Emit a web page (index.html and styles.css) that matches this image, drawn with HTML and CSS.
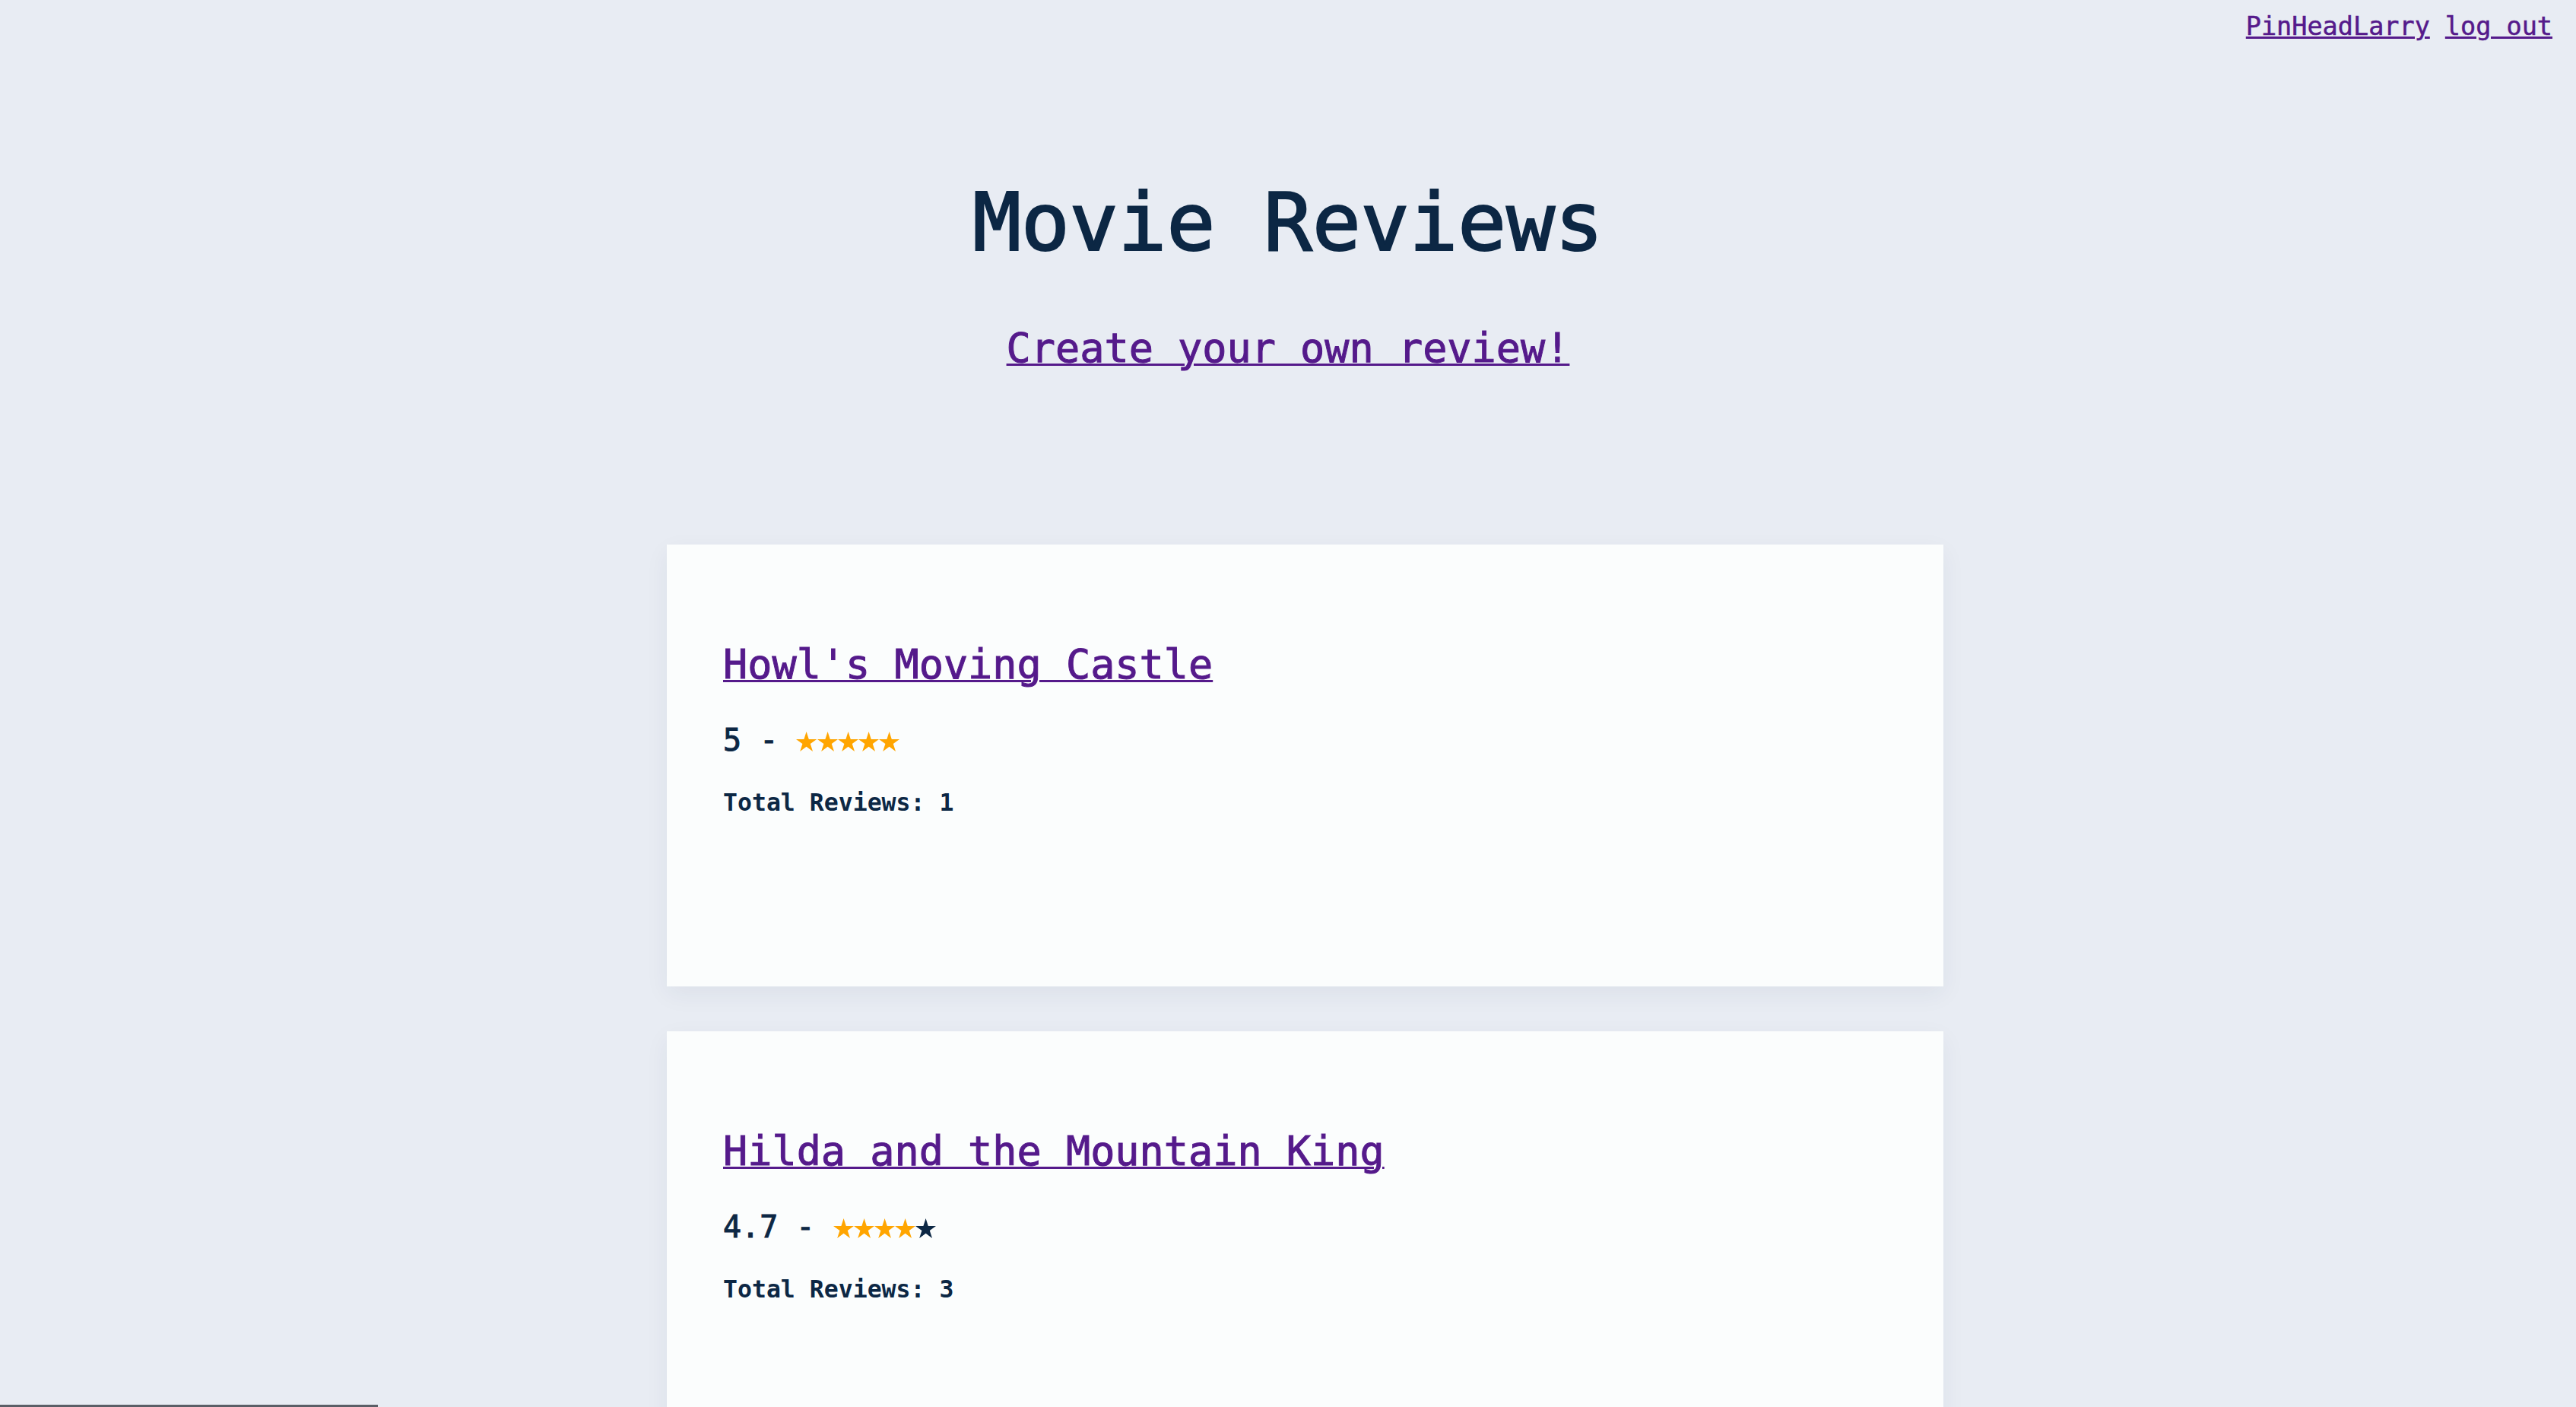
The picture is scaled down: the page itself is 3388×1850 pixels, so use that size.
FILE: index.html
```html
<!DOCTYPE html>
<html lang="en">
<head>
<meta charset="utf-8">
<title>Movie Reviews</title>
<link rel="stylesheet" href="styles.css">
</head>
<body>
<nav class="topnav">
  <a class="link" href="#user">PinHeadLarry</a> <a class="link" href="#logout">log out</a>
</nav>
<header class="hero">
  <h1 class="title">Movie Reviews</h1>
  <a class="link create" href="#new">Create your own review!</a>
</header>
<main class="list">
  <section class="card">
    <h2 class="card-title"><a class="link" href="#howl">Howl's Moving Castle</a></h2>
    <p class="rating">5 - <span class="stars"><svg class="star on" viewBox="-95.11 -100 190.22 180.9"><polygon points="0,-100 22.45,-30.9 95.11,-30.9 36.33,11.8 58.78,80.9 0,38.2 -58.78,80.9 -36.33,11.8 -95.11,-30.9 -22.45,-30.9"/></svg><svg class="star on" viewBox="-95.11 -100 190.22 180.9"><polygon points="0,-100 22.45,-30.9 95.11,-30.9 36.33,11.8 58.78,80.9 0,38.2 -58.78,80.9 -36.33,11.8 -95.11,-30.9 -22.45,-30.9"/></svg><svg class="star on" viewBox="-95.11 -100 190.22 180.9"><polygon points="0,-100 22.45,-30.9 95.11,-30.9 36.33,11.8 58.78,80.9 0,38.2 -58.78,80.9 -36.33,11.8 -95.11,-30.9 -22.45,-30.9"/></svg><svg class="star on" viewBox="-95.11 -100 190.22 180.9"><polygon points="0,-100 22.45,-30.9 95.11,-30.9 36.33,11.8 58.78,80.9 0,38.2 -58.78,80.9 -36.33,11.8 -95.11,-30.9 -22.45,-30.9"/></svg><svg class="star on" viewBox="-95.11 -100 190.22 180.9"><polygon points="0,-100 22.45,-30.9 95.11,-30.9 36.33,11.8 58.78,80.9 0,38.2 -58.78,80.9 -36.33,11.8 -95.11,-30.9 -22.45,-30.9"/></svg></span></p>
    <p class="total">Total Reviews: 1</p>
  </section>
  <section class="card">
    <h2 class="card-title"><a class="link" href="#hilda">Hilda and the Mountain King</a></h2>
    <p class="rating">4.7 - <span class="stars"><svg class="star on" viewBox="-95.11 -100 190.22 180.9"><polygon points="0,-100 22.45,-30.9 95.11,-30.9 36.33,11.8 58.78,80.9 0,38.2 -58.78,80.9 -36.33,11.8 -95.11,-30.9 -22.45,-30.9"/></svg><svg class="star on" viewBox="-95.11 -100 190.22 180.9"><polygon points="0,-100 22.45,-30.9 95.11,-30.9 36.33,11.8 58.78,80.9 0,38.2 -58.78,80.9 -36.33,11.8 -95.11,-30.9 -22.45,-30.9"/></svg><svg class="star on" viewBox="-95.11 -100 190.22 180.9"><polygon points="0,-100 22.45,-30.9 95.11,-30.9 36.33,11.8 58.78,80.9 0,38.2 -58.78,80.9 -36.33,11.8 -95.11,-30.9 -22.45,-30.9"/></svg><svg class="star on" viewBox="-95.11 -100 190.22 180.9"><polygon points="0,-100 22.45,-30.9 95.11,-30.9 36.33,11.8 58.78,80.9 0,38.2 -58.78,80.9 -36.33,11.8 -95.11,-30.9 -22.45,-30.9"/></svg><svg class="star off" viewBox="-95.11 -100 190.22 180.9"><polygon points="0,-100 22.45,-30.9 95.11,-30.9 36.33,11.8 58.78,80.9 0,38.2 -58.78,80.9 -36.33,11.8 -95.11,-30.9 -22.45,-30.9"/></svg></span></p>
    <p class="total">Total Reviews: 3</p>
  </section>
</main>
<div class="scroll-thumb"></div>
</body>
</html>
```
FILE: styles.css
```css
html {
  overflow: hidden;
}
body {
  margin: 0;
  background: #e8ecf3;
  color: #0c2744;
  font-family: "DejaVu Sans Mono", "Liberation Mono", monospace;
}
.link {
  color: #551a8b;
  text-decoration: underline;
  text-decoration-thickness: 3px;
}
.topnav {
  display: flex;
  justify-content: flex-end;
  gap: 20px;
  padding: 15px 31px 0 0;
  font-size: 33.5px;
  line-height: 40px;
  -webkit-text-stroke: 0.5px currentColor;
}
.hero {
  display: flex;
  flex-direction: column;
  align-items: center;
}
.title {
  margin: 176px 0 0;
  font-size: 106px;
  font-weight: normal;
  line-height: 124px;
  -webkit-text-stroke: 2.2px currentColor;
}
.create {
  margin-top: 72px;
  font-size: 53.5px;
  line-height: 62px;
  -webkit-text-stroke: 1px currentColor;
}
.list {
  width: 1679px;
  margin: 227px 0 0 calc(50% - 817px);
  display: flex;
  flex-direction: column;
  gap: 59px;
}
.card {
  background: #fbfdfd;
  box-shadow: 0 10px 30px rgba(40, 50, 80, 0.06);
  padding: 127px 70px 223px 74px;
}
.card-title {
  margin: 0;
  font-size: 53.5px;
  font-weight: normal;
  line-height: 62px;
  -webkit-text-stroke: 1px currentColor;
}
.rating {
  margin: 45px 0 0;
  font-size: 40px;
  line-height: 47px;
  -webkit-text-stroke: 1px currentColor;
}
.stars {
  white-space: nowrap;
  -webkit-text-stroke: 0;
}
.star {
  width: 27.2px;
  height: 26px;
  vertical-align: -1px;
}
.star.on {
  fill: #ffa500;
}
.star.off {
  fill: #0c2744;
}
.total {
  margin: 40px 0 0;
  font-size: 31.5px;
  font-weight: bold;
  line-height: 37px;
}
.scroll-thumb {
  position: fixed;
  left: 0;
  bottom: 0;
  width: 497px;
  height: 3px;
  background: #5a5e66;
}
```
